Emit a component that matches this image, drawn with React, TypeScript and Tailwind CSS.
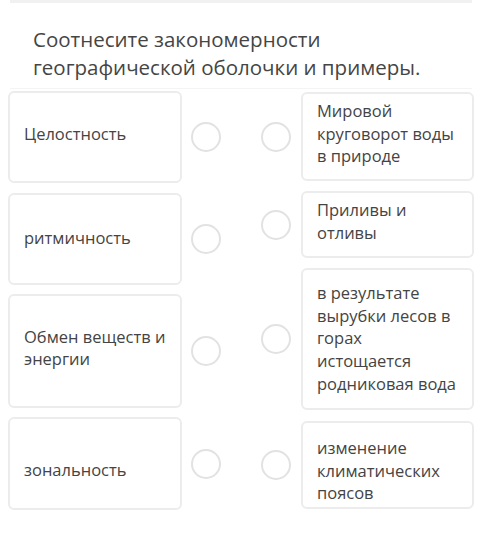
const LEFT = [
  { lines: ["Целостность"], h: "h-[92px]", mt: "mt-[91px]", pb: "pb-[6px]" },
  { lines: ["ритмичность"], h: "h-[92px]", mt: "mt-[10px]", pb: "pb-[2px]" },
  { lines: ["Обмен веществ и", "энергии"], h: "h-[114px]", mt: "mt-[9px]", pb: "pb-[6px]" },
  { lines: ["зональность"], h: "h-[93px]", mt: "mt-[9px]", pb: "pt-[12px]" },
];

const RIGHT = [
  { lines: ["Мировой", "круговорот воды", "в природе"], h: "h-[89px]", mt: "mt-[92px]", pt: "pt-[6px]" },
  { lines: ["Приливы и", "отливы"], h: "h-[67px]", mt: "mt-[10px]", pt: "pt-[6px]" },
  {
    lines: ["в результате", "вырубки лесов в", "горах", "истощается", "родниковая вода"],
    h: "h-[142px]",
    mt: "mt-[10px]",
    pt: "pt-[12px]",
  },
  { lines: ["изменение", "климатических", "поясов"], h: "h-[88px]", mt: "mt-[11px]", pt: "pt-[14px]" },
];

function Circle() {
  return <div className="w-[30px] h-[30px] shrink-0 rounded-full border-[2.5px] border-[#e2e2e2] bg-white" />;
}

function Lines({ lines }: { lines: string[] }) {
  return (
    <div>
      {lines.map((l) => (
        <div key={l} className="whitespace-nowrap">
          {l}
        </div>
      ))}
    </div>
  );
}

export default function App() {
  return (
    <div
      className="relative w-[500px] h-[538px] overflow-hidden bg-white text-[#444]"
      style={{ fontFamily: '"Open Sans", "Noto Sans", sans-serif' }}
    >
      <div className="absolute left-[10px] top-0 w-[462px] h-[3px] bg-[#f1f1f1]" />
      <div className="absolute left-[10px] top-[88px] w-[462px] h-px bg-[#f4f4f4]" />
      <h1 className="absolute left-[33px] top-[25px] text-[20.5px] leading-[28px] font-normal text-[#454545]">
        Соотнесите закономерности
        <br />
        географической оболочки и примеры.
      </h1>

      <div className="absolute left-[8px] top-0 flex flex-col">
        {LEFT.map((c) => (
          <div key={c.lines[0]} className={`flex items-center ${c.mt}`}>
            <div
              className={`w-[174px] ${c.h} ${c.pb} flex items-center rounded-[6px] border-2 border-[#ececec] bg-white pl-[14px] pr-[6px] text-[16.5px] leading-[22px]`}
            >
              <Lines lines={c.lines} />
            </div>
            <div className="ml-[9px]">
              <Circle />
            </div>
          </div>
        ))}
      </div>

      <div className="absolute left-[261px] top-0 flex flex-col">
        {RIGHT.map((c) => (
          <div key={c.lines[0]} className={`flex items-center ${c.mt}`}>
            <Circle />
            <div
              className={`ml-[10px] w-[173px] ${c.h} ${c.pt} rounded-[6px] border-2 border-[#ececec] bg-white pl-[14px] pr-[6px] text-[16.5px] leading-[22.7px]`}
            >
              <Lines lines={c.lines} />
            </div>
          </div>
        ))}
      </div>
    </div>
  );
}
